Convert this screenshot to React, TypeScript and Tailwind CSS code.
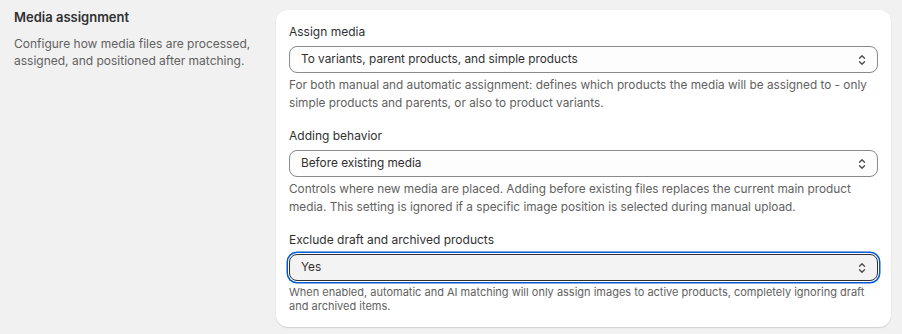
const fields = [
    {
        label: 'Assign media',
        value: 'To variants, parent products, and simple products',
        help: 'For both manual and automatic assignment: defines which products the media will be assigned to - only simple products and parents, or also to product variants.',
        small: false,
        focused: false,
    },
    {
        label: 'Adding behavior',
        value: 'Before existing media',
        help: 'Controls where new media are placed. Adding before existing files replaces the current main product media. This setting is ignored if a specific image position is selected during manual upload.',
        small: false,
        focused: false,
    },
    {
        label: 'Exclude draft and archived products',
        value: 'Yes',
        help: 'When enabled, automatic and AI matching will only assign images to active products, completely ignoring draft and archived items.',
        small: true,
        focused: true,
    },
]

function SelectIcon() {
    return (
        <svg width="10" height="14" viewBox="0 0 10 14" fill="none" stroke="currentColor" strokeWidth={1.3} strokeLinecap="round" strokeLinejoin="round">
            <path d="M2.5 5.2L5 2.7l2.5 2.5" />
            <path d="M2.5 8.8L5 11.3l2.5-2.5" />
        </svg>
    )
}

export default function App() {
    return (
        <div className="min-h-[334px] w-[902px] bg-[#f1f1f1] flex text-[#303030]" style={{ fontFamily: 'Inter, "Noto Sans", sans-serif' }}>
            <div className="w-[276px] shrink-0 pl-[14px] pt-[7px] pr-[22px]">
                <h2 className="text-[13px] leading-[20px] font-semibold">Media assignment</h2>
                <p className="mt-2 text-[12px] leading-[17px] text-[#616161]">
                    Configure how media files are processed, assigned, and positioned after matching.
                </p>
            </div>

            <div className="mt-[10px] mb-[7px] mr-[11px] flex-1 bg-white rounded-xl shadow-[0_1px_0_0_rgba(26,26,26,0.07),0_1px_2px_rgba(0,0,0,0.08)] px-[13px] pt-[12px] pb-[14px] flex flex-col gap-[14px]">
                {fields.map(f => (
                    <div key={f.label}>
                        <div className="text-[12px] leading-[20px]">{f.label}</div>
                        <div
                            className={
                                f.focused
                                    ? 'mt-1 h-[27px] flex items-center justify-between pl-[11px] pr-[10px] rounded-lg border border-[#303030] bg-[#f3f3f3] shadow-[0_0_0_1px_#ffffff,0_0_0_2.5px_#005bd3]'
                                    : 'mt-1 h-[27px] flex items-center justify-between pl-[11px] pr-[10px] rounded-lg border border-[#8a8a8a] bg-[#fdfdfd]'
                            }
                        >
                            <span className="text-[11.8px]">{f.value}</span>
                            <span className="text-[#4a4a4a]">
                                <SelectIcon />
                            </span>
                        </div>
                        <p
                            className={
                                f.small
                                    ? 'mt-[4px] text-[11px] leading-[14px] text-[#616161]'
                                    : 'mt-[4px] text-[11.8px] leading-[17.5px] text-[#616161]'
                            }
                        >
                            {f.help}
                        </p>
                    </div>
                ))}
            </div>
        </div>
    )
}
